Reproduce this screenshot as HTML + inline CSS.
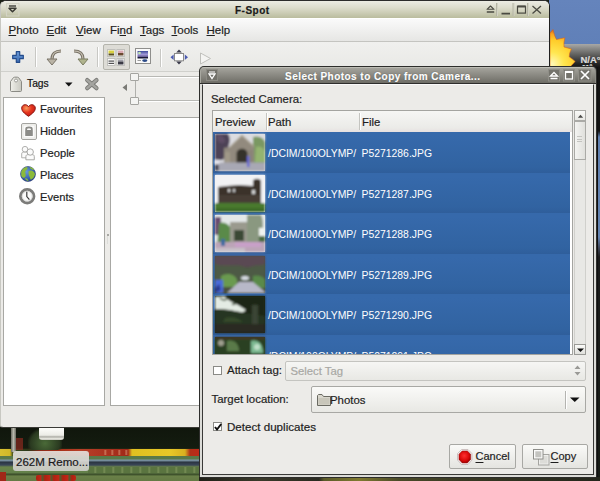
<!DOCTYPE html>
<html><head><meta charset="utf-8">
<style>
*{box-sizing:border-box;margin:0;padding:0}
html,body{width:600px;height:481px;overflow:hidden}
body{position:relative;font-family:"Liberation Sans",sans-serif;font-size:11px;color:#1e1e1e;background:#1b2116;-webkit-text-stroke:0.2px currentColor}
.a{position:absolute}
.t{position:absolute;white-space:nowrap;line-height:1}
u{text-decoration:underline;text-underline-offset:1px}
svg{position:absolute;overflow:visible}
.sep{position:absolute;width:2px;border-left:1px solid #c8c8c4;border-right:1px solid #fff}
.row{position:absolute;left:0;width:357px;height:40.6px;background:linear-gradient(#3669ab 10%,#3163a1 85%,#2f5e9b)}
.thumb{position:absolute;left:1.5px;top:2px;width:50px;height:37px}
.rt{position:absolute;top:17px;color:#fff;white-space:nowrap;line-height:1;font-size:10.4px;-webkit-text-stroke:0}
</style></head><body>

<svg width="0" height="0" style="position:absolute"><defs><filter id="bl" x="-5%" y="-5%" width="110%" height="110%"><feGaussianBlur stdDeviation="1"/></filter></defs></svg>
<!-- desktop top-right -->
<div class="a" style="left:549px;top:0;width:51px;height:44px;background:linear-gradient(#6584bc,#6080b8)"></div>
<div class="a" style="left:549px;top:44px;width:51px;height:23px;background:linear-gradient(#a8a8a6,#6a6a68 40%,#262626 85%,#161616)"></div>
<svg style="left:549px;top:28px" width="30" height="40" viewBox="0 0 30 40">
  <defs><radialGradient id="sun" cx="3" cy="36" r="34" gradientUnits="userSpaceOnUse"><stop offset="0" stop-color="#fff8b8"/><stop offset="0.35" stop-color="#ffe650"/><stop offset="0.7" stop-color="#ffcc2a"/><stop offset="0.88" stop-color="#f8a420"/><stop offset="1" stop-color="#d86818"/></radialGradient></defs>
  <path d="M1 5 L4 1.5 Q5.5 8.5 7.5 11.5 Q12 10.5 15.8 9.8 Q14.5 15.5 15 19 Q19 20 22.4 21 Q20 25.5 20.2 28.8 Q23.5 31 26.2 33.4 Q23.5 36.5 21.5 38.5 L1 38.5 Z" fill="url(#sun)" stroke="#d8601a" stroke-width="0.7" stroke-opacity="0.8"/>
</svg>
<div class="t" style="left:580.5px;top:55.3px;color:#dcdcdc;font-size:9.5px;font-weight:bold">N/A°</div>
<div class="t" style="left:582px;top:63.5px;color:#e8e8e8;font-size:7px;font-weight:bold">11°</div>
<!-- right strip -->
<div class="a" style="left:594px;top:67px;width:6px;height:414px;background:linear-gradient(#141414 0,#141414 64px,#6080b0 70px,#6282b0 170px,#3a4050 182px,#1c1c1c 190px,#181c16 414px)"></div><div class="a" style="left:597px;top:67px;width:1px;height:414px;background:#101010"></div>

<!-- desktop bottom-left garden -->
<div class="a" style="left:0;top:427px;width:200px;height:54px;background:linear-gradient(#10160c 0,#141c10 21px,#2a2a14 22px,#5a7848 29px,#5a7a48 32px,#8098a8 33px,#6a8090 34px,#2a3440 35px,#3a4658 38px,#6a8448 40px,#62804a 46px,#3a4a28 47px,#445a30 48px,#6a8048 49px,#647a44 54px)"></div>
<div class="a" style="left:0;top:449px;width:200px;height:7px;background:linear-gradient(90deg,#d8c030 0,#d0b828 10px,#3a4a20 13px,#2a3818 28px,#8a2a18 40px,#a83018 60px,#b84028 80px,#a02818 128px,#e0c020 132px,#e8c828 170px,#d8b020 185px,#b03018 190px,#c02818 200px)"></div>
<div class="a" style="left:100px;top:450px;width:30px;height:5px;background:repeating-linear-gradient(90deg,transparent 0,transparent 4px,rgba(240,200,160,.5) 5px,transparent 7px)"></div>
<div class="a" style="left:88px;top:467px;width:112px;height:6px;background:repeating-linear-gradient(90deg,#5a7440 0,#5a7440 6px,#7a9058 7px,#5a7440 9px)"></div>
<div class="a" style="left:28px;top:428px;width:34px;height:22px;background:radial-gradient(ellipse at 50% 70%,#4a6a38,#2a3a20 60%,transparent 75%)"></div>
<div class="a" style="left:15px;top:438px;width:8px;height:12px;background:#8a2a20;opacity:.7"></div>
<div class="a" style="left:11px;top:428px;width:5px;height:24px;background:linear-gradient(90deg,#6a6a60,#b8b8ac,#6a6a60)"></div>
<div class="a" style="left:36px;top:475px;width:40px;height:6px;background:repeating-linear-gradient(90deg,#b02010 0,#c02818 5px,#4a6030 6px,#b02010 9px);border-radius:2px"></div><div class="a" style="left:0;top:472px;width:6px;height:9px;background:#a02818"></div>
<div class="a" style="left:39px;top:428px;width:25px;height:12px;background:linear-gradient(#fdfdfa,#ececE6 60%,#a8a8a0 75%,#e8e8e0 85%,#c8c8c0);border-radius:0 0 3px 3px"></div>
<div class="a" style="left:13px;top:451px;width:76px;height:20px;background:linear-gradient(rgba(228,225,220,.92),rgba(205,205,200,.92));border-radius:3px"></div>
<div class="t" style="left:16px;top:456.8px;font-size:11.5px;color:#1a1a1a">262M Remo...</div>

<div class="a" style="left:199px;top:477px;width:401px;height:4px;background:linear-gradient(90deg,#202018 0,#3a3a2a 60px,#2a2a20 120px,#5a5a28 125px,#807a30 160px,#4a4a28 200px,#3a3a24 260px,#24261c 401px)"></div>
<!-- MAIN WINDOW -->
<div class="a" id="main" style="left:0;top:0;width:550px;height:428px;background:#ecebe8;border:1px solid #c8c8c2;border-top:1px solid #2c2c2c;border-right:1px solid #202020;border-bottom:1px solid #3a3a36;border-radius:6px 6px 3px 3px;overflow:hidden">
  <!-- title -->
  <div class="a" style="left:0;top:0;width:548px;height:17px;background:linear-gradient(#ecece4,#dcdccc 40%,#babc9e)"></div>
  <svg style="left:5px;top:1px" width="14" height="15"><rect x="0.5" y="1.5" width="12.5" height="12.5" fill="none" stroke="#d4d4c6"/><path d="M3 6.2 L10 6.2 L6.5 9.8 Z" fill="none" stroke="#3a3a34" stroke-width="1.5" stroke-linejoin="round"/><path d="M3 4 H10" stroke="#4a4a44" stroke-width="1.4"/></svg>
  <div class="t" style="left:234px;top:4.5px;font-weight:bold;font-size:10px;letter-spacing:0.5px;color:#1a1a1a">F-Spot</div>
  <svg style="left:483px;top:0px" width="64" height="17">
    <g stroke="#d2d2c4" stroke-width="1"><path d="M13.5 2 V15"/><path d="M30 2 V15"/><path d="M44.5 2 V15"/></g>
    <g stroke="#b4b4a4" stroke-width="1"><path d="M12.5 2 V15"/><path d="M29 2 V15"/><path d="M43.5 2 V15"/></g>
    <path d="M3 8.3 L6.5 5 L10 8.3 Z" fill="none" stroke="#4a4a42" stroke-width="1.1" stroke-linejoin="round"/><path d="M2.8 11 H10.2" stroke="#4a4a42" stroke-width="1.3"/>
    <path d="M17.5 12.6 H26" stroke="#4a4a42" stroke-width="1.6"/>
    <rect x="33.5" y="5.3" width="8" height="6.8" fill="none" stroke="#4a4a42" stroke-width="1.2"/><path d="M33.5 5.5 H41.5" stroke="#4a4a42" stroke-width="1.8"/>
    <path d="M48.5 5 L57 12.5 M57 5 L48.5 12.5" stroke="#4a4a42" stroke-width="1.3"/>
  </svg>
  <!-- menubar -->
  <div class="a" style="left:0;top:17px;width:548px;height:24px;background:linear-gradient(#fafafa,#e6e6e4);border-top:1px solid #fff;border-bottom:1px solid #c4c4c0"></div>
  <div class="t" style="left:7.5px;top:23.7px;font-size:11.5px"><u>P</u>hoto</div>
  <div class="t" style="left:45.5px;top:23.7px;font-size:11.5px"><u>E</u>dit</div>
  <div class="t" style="left:75px;top:23.7px;font-size:11.5px"><u>V</u>iew</div>
  <div class="t" style="left:109px;top:23.7px;font-size:11.5px">Fi<u>n</u>d</div>
  <div class="t" style="left:139px;top:23.7px;font-size:11.5px"><u>T</u>ags</div>
  <div class="t" style="left:170.5px;top:23.7px;font-size:11.5px"><u>T</u>ools</div>
  <div class="t" style="left:205.5px;top:23.7px;font-size:11.5px"><u>H</u>elp</div>
  <!-- toolbar -->
  <div class="a" style="left:0;top:41px;width:548px;height:29.5px;background:linear-gradient(#f0f0ee,#e8e8e5);border-bottom:1px solid #d0d0cc"></div>
  <svg style="left:10.5px;top:49.8px" width="13" height="13"><defs><linearGradient id="pg" x1="0" y1="0" x2="0" y2="1"><stop offset="0" stop-color="#6a9ad8"/><stop offset="1" stop-color="#3a6ab0"/></linearGradient></defs><path d="M4.3 0.7 H7.7 V4.3 H11.3 V7.7 H7.7 V11.3 H4.3 V7.7 H0.7 V4.3 H4.3 Z" fill="url(#pg)" stroke="#244c8c" stroke-width="1.2" stroke-linejoin="round"/></svg>
  <div class="sep" style="left:34px;top:46px;height:20px"></div>
  <svg style="left:45px;top:48px" width="16" height="18"><path d="M15 2 C9 2 6 5 6 10 L6 11" fill="none" stroke="#7a7468" stroke-width="3.2"/><path d="M15 2 C9 2 6 5 6 10" fill="none" stroke="#c8c2b4" stroke-width="1.2"/><path d="M1 10 L11 10 L6 16 Z" fill="#bab4a6" stroke="#7a7468" stroke-width="1"/></svg>
  <svg style="left:72px;top:48px" width="16" height="18"><path d="M1 2 C7 2 10 5 10 10 L10 11" fill="none" stroke="#7a7468" stroke-width="3.2"/><path d="M1 2 C7 2 10 5 10 10" fill="none" stroke="#c8c2b4" stroke-width="1.2"/><path d="M5 10 L15 10 L10 16 Z" fill="#b0b48e" stroke="#7a7c60" stroke-width="1"/></svg>
  <div class="sep" style="left:96px;top:46px;height:20px"></div>
  <div class="a" style="left:102px;top:43px;width:27px;height:25.5px;background:#dddcd6;border:1px solid #b4b4ac;border-radius:2px"></div>
  <svg style="left:106px;top:48px" width="19" height="19">
    <g stroke="#c0c0bc" stroke-width="1" fill="#fbfbfa"><rect x="0.5" y="0.5" width="7.5" height="7" /><rect x="10" y="0.5" width="7.5" height="7"/><rect x="0.5" y="9.5" width="7.5" height="7"/><rect x="10" y="9.5" width="7.5" height="7"/></g>
    <rect x="1.5" y="1.5" width="5.5" height="3" fill="#d8d040"/><rect x="1.5" y="4.5" width="5.5" height="2" fill="#5a5020"/>
    <rect x="11" y="1.5" width="5.5" height="2.5" fill="#d8a8b0"/><rect x="11" y="4" width="5.5" height="2.5" fill="#6a4a30"/>
    <rect x="1.5" y="11.5" width="5.5" height="1.2" fill="#505050"/><rect x="1.5" y="13.8" width="5.5" height="1.2" fill="#505050"/>
    <rect x="11" y="10.5" width="5.5" height="2" fill="#a0a0a8"/><rect x="11" y="12.5" width="5.5" height="3" fill="#3a3a44"/>
  </svg>
  <svg style="left:134px;top:47px" width="16" height="16"><defs><linearGradient id="mg" x1="0" y1="0" x2="0" y2="1"><stop offset="0" stop-color="#3a4898"/><stop offset="0.45" stop-color="#a098d8"/><stop offset="0.75" stop-color="#6a6098"/><stop offset="0.8" stop-color="#1a1a38"/><stop offset="1" stop-color="#1a1a38"/></linearGradient></defs><rect x="0.5" y="0.5" width="15" height="15" fill="#fafafa" stroke="#8e8e8c"/><rect x="2.5" y="3" width="10.5" height="7.5" fill="url(#mg)"/><circle cx="4.5" cy="5" r="1.3" fill="#c0e8b0"/><path d="M2.5 12.5 H6" stroke="#9a9a9a" stroke-width="1"/><ellipse cx="9.8" cy="12.6" rx="2.6" ry="1.4" fill="#2a4a88"/></svg>
  <div class="sep" style="left:159px;top:48px;height:18px"></div>
  <svg style="left:169px;top:48px" width="20" height="18">
    <rect x="4.5" y="4.5" width="9" height="7.3" fill="#fff" stroke="#8a8a8a"/>
    <path d="M9 0.5 L11.8 3.5 H6.2 Z" fill="#3a3a4a"/><path d="M9 15.5 L11.8 12.5 H6.2 Z" fill="#3a3a4a"/>
    <path d="M0.5 8.2 L3.6 5.4 V11 Z" fill="#4a5ab0"/><path d="M18 8.2 L14.8 5.4 V11 Z" fill="#4a5ab0"/>
  </svg>
  <svg style="left:197.5px;top:50.5px" width="14" height="14"><path d="M1.5 1 L11.5 6.5 L1.5 12 Z" fill="#f4f4f2" stroke="#c0c0bc" stroke-width="1"/></svg>

  <!-- tags header -->
  <svg style="left:8px;top:75px" width="14" height="17"><defs><linearGradient id="tg" x1="0" x2="1"><stop offset="0" stop-color="#f0f0ea"/><stop offset="1" stop-color="#c8c8c0"/></linearGradient></defs><path d="M1.5 5.5 L4.5 1.5 C5 1 9 1 9.5 1.5 L12.5 5.5 V14.5 C12.5 15.2 12 15.5 11.5 15.5 H2.5 C2 15.5 1.5 15.2 1.5 14.5 Z" fill="url(#tg)" stroke="#8a8a84" stroke-width="1"/><circle cx="7" cy="4.5" r="1.5" fill="#fff" stroke="#8a8a84" stroke-width="0.8"/></svg>
  <div class="t" style="left:26px;top:78px;font-size:10.3px;color:#111">Tags</div>
  <svg style="left:64px;top:81px" width="8" height="5"><path d="M0 0.5 H7.5 L3.75 4.5 Z" fill="#111"/></svg>
  <svg style="left:84px;top:77px" width="15" height="14"><path d="M2.2 2.1 L11.5 10.2 M11.5 2.1 L2.2 10.2" stroke="#7c7c78" stroke-width="4.2" stroke-linecap="round"/><path d="M2.2 2.1 L11.5 10.2 M11.5 2.1 L2.2 10.2" stroke="#a4a4a0" stroke-width="2.4" stroke-linecap="round"/></svg>

  <!-- left pane -->
  <div class="a" style="left:2px;top:96px;width:102px;height:309px;background:#fff;border:1px solid #a8a8a4"></div>
  <svg style="left:19.5px;top:102.5px" width="15" height="13"><defs><radialGradient id="hg" cx="0.35" cy="0.3" r="0.8"><stop offset="0" stop-color="#f8a060"/><stop offset="0.45" stop-color="#e83820"/><stop offset="1" stop-color="#b81410"/></radialGradient></defs><path d="M7.5 12.3 C3 9.2 0.7 7 0.7 4.2 C0.7 2 2.3 0.7 4.2 0.7 C5.6 0.7 6.9 1.5 7.5 2.8 C8.1 1.5 9.4 0.7 10.8 0.7 C12.7 0.7 14.3 2 14.3 4.2 C14.3 7 12 9.2 7.5 12.3 Z" fill="url(#hg)" stroke="#8a1410" stroke-width="1"/></svg>
  <div class="t" style="left:39px;top:103px;font-size:11.2px">Favourites</div>
  <svg style="left:19.5px;top:122px" width="16" height="17"><rect x="0.5" y="0.5" width="15" height="16" rx="1.5" fill="#f6f6f4" stroke="#a4a4a0"/><rect x="2" y="2" width="12" height="13" fill="#fbfbfa" stroke="#e0e0dc" stroke-width="0.8"/><path d="M5.2 7 V5.8 C5.2 4 10.8 4 10.8 5.8 V7" fill="none" stroke="#8c8c88" stroke-width="1.8"/><rect x="4.2" y="7" width="7.6" height="6" rx="0.5" fill="#8c8c88"/></svg>
  <div class="t" style="left:39px;top:125px;font-size:11.2px">Hidden</div>
  <svg style="left:19px;top:145px" width="16" height="15"><path d="M1.7 11.8 V8 C1.7 6.5 2.5 6 4 6 H6 C7.2 6 7.7 6.5 7.7 8 V11.8 Z" fill="#fbfbfb" stroke="#a8a8a6" stroke-width="0.9"/><circle cx="5" cy="3.2" r="2.8" fill="#fbfbfb" stroke="#a8a8a6" stroke-width="0.9"/><path d="M5.9 13.8 V10.5 C5.9 9.2 6.8 8.6 8.3 8.6 H12 C13.5 8.6 14.3 9.2 14.3 10.5 V13.8 Z" fill="#fbfbfb" stroke="#a0a09e" stroke-width="0.9"/><circle cx="10.2" cy="6" r="3.2" fill="#fbfbfb" stroke="#a0a09e" stroke-width="0.9"/></svg>
  <div class="t" style="left:39px;top:147px;font-size:11.2px">People</div>
  <svg style="left:19px;top:165px" width="16" height="16"><defs><radialGradient id="gl" cx="0.4" cy="0.35" r="0.75"><stop offset="0" stop-color="#6a9ad8"/><stop offset="0.6" stop-color="#3a64b0"/><stop offset="1" stop-color="#1e3a80"/></radialGradient></defs><circle cx="8" cy="8" r="7.5" fill="url(#gl)" stroke="#2a3a70" stroke-width="0.6"/><path d="M1.2 6 C2 3 4 1.2 7 1 C8.5 2.5 6.5 4 5.5 5 C4.5 6.5 6.5 8.5 5.5 10.5 C4.5 12.5 2.5 12 1.3 10 Z M8.5 5.5 C10.5 3.5 14 4.5 15 8 C14.5 11 12.5 13.5 10.5 13.5 C10 11 8 8.5 8.5 5.5 Z M9.5 1 C12 1.2 13.5 2.5 14.2 3.8 C12.2 4 10.2 3 9.5 1 Z M5 12.5 C6.5 12 8 13 8.5 15 C7 15 5.5 14 5 12.5Z" fill="#8cba3a"/></svg>
  <div class="t" style="left:39px;top:168.5px;font-size:11.2px">Places</div>
  <svg style="left:18px;top:187px" width="17" height="17"><circle cx="8.2" cy="8.2" r="6.8" fill="#fafafa" stroke="#7c7c7a" stroke-width="2.8"/><circle cx="8.2" cy="8.2" r="5" fill="none" stroke="#d0d0ce" stroke-width="0.8"/><path d="M7.8 3.8 V8.6 L10.4 11.6" fill="none" stroke="#3a3a3a" stroke-width="1.2"/></svg>
  <div class="t" style="left:39px;top:190.5px;font-size:11.2px">Events</div>

  <!-- pane handle -->
  <div class="a" style="left:105.5px;top:233px;width:2px;height:1.5px;background:#a8a8a4"></div><div class="a" style="left:105.5px;top:235px;width:2px;height:8px;background:linear-gradient(90deg,#d4d4d0,#f4f4f2)"></div>

  <!-- slider -->
  <svg style="left:120.5px;top:83px" width="6" height="8"><path d="M5 0 V7 L0.5 3.5 Z" fill="#7a7a76"/></svg>
  <div class="a" style="left:134px;top:78px;width:1px;height:20px;background:#b0b0ac"></div>
  <div class="a" style="left:137px;top:75px;width:63px;height:2px;border-top:1px solid #b8b8b4;border-bottom:1px solid #fff"></div>
  <div class="a" style="left:137px;top:99px;width:63px;height:2px;border-top:1px solid #b8b8b4;border-bottom:1px solid #fff"></div>
  <div class="a" style="left:129px;top:72px;width:9px;height:8px;background:#f4f4f2;border:1px solid #a4a4a0;border-radius:1px"></div>
  <div class="a" style="left:129px;top:96px;width:9px;height:8px;background:#f4f4f2;border:1px solid #a4a4a0;border-radius:1px"></div>

  <!-- photo area -->
  <div class="a" style="left:109px;top:116px;width:440px;height:289px;background:#fff;border:1px solid #a8a8a4"></div>
</div>

<!-- DIALOG -->
<div class="a" id="dlg" style="left:199px;top:66px;width:398px;height:412px;background:#2e2e2c;border-radius:5px 5px 2px 2px;overflow:hidden">
  <div class="a" style="left:1px;top:1px;width:396px;height:16px;background:linear-gradient(#a4a39c,#6e6d66);border-radius:4px 4px 0 0;border-top:1px solid #bcbcb4;border-left:1px solid #a8a8a0;border-right:1px solid #8a8a84"></div>
  <div class="a" style="left:1px;top:18px;width:396px;height:393px;background:#dcdcd8"></div>
  <div class="a" style="left:3px;top:18px;width:392px;height:391px;background:#ecebe8;border:1px solid #3a3a38;border-top:1px solid #fafafa"></div>
  <svg style="left:7px;top:3px" width="12" height="12"><rect x="0.5" y="0.5" width="11" height="11" fill="#72716a" stroke="#8c8b84"/><path d="M3 5 H9 L6 9.5 Z" fill="none" stroke="#fff" stroke-width="1.3"/><path d="M3 3 H9" stroke="#fff"/></svg>
  <div class="t" style="left:86px;top:6px;font-weight:bold;font-size:10px;letter-spacing:0.46px;color:#fff;text-shadow:0 0 1px #333">Select Photos to Copy from Camera...</div>
  <svg style="left:349px;top:3px" width="45" height="13">
    <g fill="#74736c" stroke="#8e8d86"><rect x="0.5" y="0.5" width="11" height="11.5"/><rect x="15.5" y="0.5" width="11" height="11.5"/><rect x="30.5" y="0.5" width="12.5" height="11.5"/></g>
    <path d="M2.5 7 L6 3.5 L9.5 7 Z M2.5 9.5 H9.5" fill="none" stroke="#fff" stroke-width="1.3"/>
    <rect x="17.5" y="2.5" width="7" height="7.5" fill="none" stroke="#fff" stroke-width="1.3"/><path d="M17.5 3 H24.5" stroke="#fff" stroke-width="2"/>
    <path d="M33 2 L41 10 M41 2 L33 10" stroke="#fff" stroke-width="1.7"/>
  </svg>
  <div class="t" style="left:12px;top:28px;font-size:11.4px">Selected Camera:</div>

  <!-- tree -->
  <div class="a" style="left:13px;top:44px;width:361px;height:245px;background:#fff;border:1px solid #a4a4a0;overflow:hidden">
    <div class="a" style="left:0;top:0;width:359px;height:21px;background:linear-gradient(#f6f6f4,#ebebe8 80%,#e6e0e0)"></div>
    <div class="a" style="left:53px;top:2px;width:2px;height:17px;border-left:1px solid #c4c4c0;border-right:1px solid #fff"></div>
    <div class="a" style="left:146px;top:2px;width:2px;height:17px;border-left:1px solid #c4c4c0;border-right:1px solid #fff"></div>
    <div class="t" style="left:2px;top:6px;font-size:11.3px">Preview</div>
    <div class="t" style="left:55px;top:6px;font-size:11.3px">Path</div>
    <div class="t" style="left:149px;top:6px;font-size:11.3px">File</div>

    <div class="row" style="top:21px">
      <svg class="thumb" viewBox="0 0 50 37"><rect width="50" height="37" fill="#dcdce0"/><g filter="url(#bl)"><rect width="50" height="37" fill="#dcdce0"/><path d="M0 0 H13 C16 4 15 10 12 16 L8 26 H0Z" fill="#4e4256"/><path d="M2 1 C6 0 10 3 10 8 C7 10 3 9 2 5Z" fill="#5e4e66"/><path d="M38 3 C44 1 50 5 50 9 V29 H38Z" fill="#7a9862"/><path d="M41 13 C46 11 50 15 50 19 V28 H40Z" fill="#94b470"/><path d="M9 14 L15 13 L27 1.5 L39 12.5 V30 H9Z" fill="#928a7e"/><path d="M15 13 L27 1.5 L39 12.5" fill="none" stroke="#aca494" stroke-width="1.5"/><path d="M21.5 29 V19.5 C21.5 13 32.5 13 32.5 19.5 V29Z" fill="#34302a"/><rect x="10" y="18" width="5" height="11" fill="#a09888"/><rect x="34" y="16" width="4" height="13" fill="#8a8478"/><rect y="28.5" width="50" height="8.5" fill="#a8a8b4"/><rect x="32" y="22" width="2.5" height="11" fill="#6a6ad0"/><circle cx="2" cy="28" r="2.6" fill="#e4e4ec"/><rect x="0" y="30.5" width="3.5" height="6" fill="#3a3a48"/></g></svg>
      <div class="rt" style="left:55px">/DCIM/100OLYMP/</div><div class="rt" style="left:148.5px">P5271286.JPG</div>
    </div>
    <div class="row" style="top:61.6px">
      <svg class="thumb" viewBox="0 0 50 37"><rect width="50" height="37" fill="#f2f2f4"/><g filter="url(#bl)"><rect width="50" height="37" fill="#f2f2f4"/><path d="M3 12 L12 11 L24 10 L38 11 V6 C39 3 45 3 46 6 V29 H3Z" fill="#3a302c"/><rect x="3" y="20" width="43" height="9" fill="#463c34"/><rect x="13" y="14" width="2" height="3" fill="#e0e0e0"/><rect x="18" y="14" width="2" height="3" fill="#d0d0d0"/><rect x="37" y="15" width="3" height="4" fill="#d8d8d8"/><rect y="28" width="50" height="9" fill="#487a2e"/><rect y="33" width="50" height="4" fill="#3c6a28"/></g></svg>
      <div class="rt" style="left:55px">/DCIM/100OLYMP/</div><div class="rt" style="left:148.5px">P5271287.JPG</div>
    </div>
    <div class="row" style="top:102.2px">
      <svg class="thumb" viewBox="0 0 50 37"><rect width="50" height="37" fill="#e4e8e8"/><g filter="url(#bl)"><rect width="50" height="37" fill="#e4e8e8"/><path d="M0 2 H6 V20 H0Z" fill="#6a4a70"/><path d="M4 8 C10 6 16 10 16 16 V32 H2 Z" fill="#5a8a4a"/><rect x="15" y="7" width="18" height="21" fill="#9a9a8e"/><rect x="19" y="15" width="10" height="11" fill="#3a4836"/><path d="M32 0 H46 C49 6 48 14 46 28 H32Z" fill="#8a9880"/><rect x="44" y="13" width="6" height="8" fill="#f0f4f0"/><rect x="44" y="21" width="6" height="8" fill="#4a6a40"/><rect y="27" width="50" height="10" fill="#bca4b8"/><rect x="20" y="27" width="26" height="5" fill="#c8a0c8"/><rect y="33" width="30" height="4" fill="#c8c0c8"/><rect x="6" y="24" width="4" height="7" fill="#3a6aa0"/></g></svg>
      <div class="rt" style="left:55px">/DCIM/100OLYMP/</div><div class="rt" style="left:148.5px">P5271288.JPG</div>
    </div>
    <div class="row" style="top:142.8px">
      <svg class="thumb" viewBox="0 0 50 37"><rect width="50" height="37" fill="#4a5040"/><g filter="url(#bl)"><rect width="50" height="37" fill="#4a5040"/><rect width="50" height="11" fill="#5a4a52"/><path d="M0 8 C12 12 22 6 32 12 C40 8 46 10 50 8 V26 H0Z" fill="#4e5a44"/><path d="M6 20 C12 16 20 18 22 24 V31 H6Z" fill="#6a9a50"/><path d="M38 20 C44 18 50 22 50 24 V32 H38Z" fill="#5a8a48"/><ellipse cx="30" cy="22" rx="4" ry="2" fill="#d8dce4"/><path d="M12 37 L24 26 H38 L50 36 V37Z" fill="#b8b8c8"/><path d="M0 24 H8 V37 H0Z" fill="#4a6ad8"/><path d="M0 32 L4 28 L6 34 L0 37Z" fill="#2a3a90"/></g></svg>
      <div class="rt" style="left:55px">/DCIM/100OLYMP/</div><div class="rt" style="left:148.5px">P5271289.JPG</div>
    </div>
    <div class="row" style="top:183.4px">
      <svg class="thumb" viewBox="0 0 50 37"><rect width="50" height="37" fill="#1e2618"/><g filter="url(#bl)"><rect width="50" height="37" fill="#1e2618"/><path d="M0 1 L9 0 L15 5 L23 9 L31 14 L27 17 L15 14 L0 13 Z" fill="#e4ece4"/><path d="M5 2 C8 5 11 4 13 2 M17 8 C19 9 20 8 21 7" stroke="#3a4a34" stroke-width="1.6" fill="none"/><path d="M0 13 C10 13 20 15 31 17 L50 20 V37 H0Z" fill="#283620"/><rect x="37" y="9" width="6" height="20" fill="#3a4434"/><path d="M0 28 H50 V37 H0Z" fill="#2a2a22"/><path d="M10 22 C16 20 24 22 28 26 H8Z" fill="#344a2a"/></g></svg>
      <div class="rt" style="left:55px">/DCIM/100OLYMP/</div><div class="rt" style="left:148.5px">P5271290.JPG</div>
    </div>
    <div class="row" style="top:224px">
      <svg class="thumb" viewBox="0 0 50 37"><rect width="50" height="37" fill="#2a4020"/><g filter="url(#bl)"><rect width="50" height="37" fill="#2a4020"/><rect width="50" height="2" fill="#4a3028"/><path d="M12 4 C18 2 24 6 24 14 H12Z" fill="#5a7a48"/><path d="M36 4 C44 2 48 8 48 16 H36Z" fill="#7ab890"/><circle cx="42" cy="10" r="3" fill="#c0e0c8"/><circle cx="6" cy="6" r="3" fill="#a0a090"/></g></svg>
      <div class="rt" style="left:55px">/DCIM/100OLYMP/</div><div class="rt" style="left:148.5px">P5271291.JPG</div>
    </div>
  </div>
  <!-- scrollbar -->
  <div class="a" style="left:375px;top:44px;width:12px;height:245px;background:#e8e8e5;border:1px solid #d0d0cc"></div>
  <div class="a" style="left:375px;top:44px;width:12px;height:11px;background:linear-gradient(#fafaf8,#e8e8e4);border:1px solid #aaaaa6"></div>
  <svg style="left:377.5px;top:47.5px" width="7" height="5"><path d="M0.8 3.8 H6.2 L3.5 0.8 Z" fill="#4a4a48"/></svg>
  <div class="a" style="left:375px;top:55px;width:12px;height:39px;background:linear-gradient(90deg,#f4f4f2,#e0e0dc);border:1px solid #aaaaa6"></div>
  <div class="a" style="left:378px;top:70px;width:5px;height:8px;background:repeating-linear-gradient(#c4c4c0 0,#c4c4c0 1px,transparent 1px,transparent 2.5px)"></div>
  <div class="a" style="left:375px;top:278px;width:12px;height:11px;background:linear-gradient(#fafaf8,#e0e0dc);border:1px solid #9a9a96"></div>
  <svg style="left:377.5px;top:282px" width="7" height="5"><path d="M0 0.5 H7 L3.5 4 Z" fill="#111"/></svg>

  <!-- attach tag -->
  <div class="a" style="left:14px;top:300px;width:9px;height:9px;background:#fff;border:1px solid #8a8a86"></div>
  <div class="t" style="left:28px;top:298.5px;font-size:11.5px">Attach tag:</div>
  <div class="a" style="left:85.5px;top:294.5px;width:301px;height:20px;background:linear-gradient(#f6f6f4,#e8e8e4);border:1px solid #c4c4c0;border-radius:2px"></div>
  <div class="t" style="left:91.5px;top:299.5px;color:#a8a8a4;font-size:11.3px">Select Tag</div>
  <svg style="left:375px;top:299px" width="8" height="11"><path d="M0.5 4 L3.5 0.5 L6.5 4 Z M0.5 7 L3.5 10.5 L6.5 7 Z" fill="#9a9a96"/></svg>

  <!-- target location -->
  <div class="t" style="left:12.5px;top:328px;font-size:11.4px">Target location:</div>
  <div class="a" style="left:112px;top:320px;width:275px;height:27px;background:linear-gradient(#fafaf8,#e8e8e4);border:1px solid #a8a8a4;border-radius:2px"></div>
  <svg style="left:118px;top:327px" width="14" height="13"><path d="M0.5 2.5 V12.5 H13.5 V3.5 H6.5 L5 1.5 H1.5 Z" fill="#d8d6cc" stroke="#6a6a62"/><rect x="1.5" y="5" width="11" height="6.5" fill="#c8c6ba"/></svg>
  <div class="t" style="left:131px;top:328.5px;font-size:11.4px">Photos</div>
  <div class="a" style="left:366px;top:324.5px;width:2px;height:18px;border-left:1px solid #b4b4b0;border-right:1px solid #fff"></div>
  <svg style="left:370.5px;top:331px" width="10" height="6"><path d="M0 0.5 H9.5 L4.75 5 Z" fill="#111"/></svg>

  <!-- detect dup -->
  <div class="a" style="left:14px;top:355.5px;width:9px;height:9px;background:#fff;border:1px solid #8a8a86"></div>
  <svg style="left:15px;top:356.5px" width="8" height="8"><path d="M1 4 L3 6.5 L7.2 1" fill="none" stroke="#111" stroke-width="2"/></svg>
  <div class="t" style="left:28px;top:355px;font-size:11.6px">Detect duplicates</div>

  <!-- buttons -->
  <div class="a" style="left:250px;top:378px;width:67px;height:25px;background:linear-gradient(#fafaf8,#e4e4e0);border:1px solid #a8a8a4;border-radius:2px"></div>
  <svg style="left:258px;top:382.5px" width="16" height="16"><defs><radialGradient id="cg" cx="0.45" cy="0.4" r="0.6"><stop offset="0" stop-color="#ff3030"/><stop offset="0.7" stop-color="#d80808"/><stop offset="1" stop-color="#a00000"/></radialGradient></defs><path d="M4.6 0.5 H11 L15 4.6 V11 L11 15.5 H4.6 L0.5 11 V4.6 Z" fill="#f2eeee" stroke="#c4b4b4" stroke-width="0.8"/><path d="M5.2 2 H10.4 L13.6 5.2 V10.4 L10.4 13.9 H5.2 L2 10.4 V5.2 Z" fill="url(#cg)" stroke="#9a1010" stroke-width="0.6"/></svg>
  <div class="t" style="left:276.5px;top:385px"><u style="text-underline-offset:2px">C</u>ancel</div>
  <div class="a" style="left:322.5px;top:378px;width:66.5px;height:25px;background:linear-gradient(#fafaf8,#e4e4e0);border:1px solid #a8a8a4;border-radius:2px"></div>
  <svg style="left:333.5px;top:382.5px" width="17" height="17"><rect x="5.5" y="5.5" width="10.5" height="10.5" fill="#eeeeec" stroke="#a4a4a0"/><rect x="7" y="7" width="7.5" height="7.5" fill="#dcdcd8"/><rect x="0.5" y="0.5" width="9.5" height="9.5" fill="#fbfbfa" stroke="#8e8e8a"/><rect x="2.3" y="2.3" width="6" height="6" fill="#c4c4c0"/></svg>
  <div class="t" style="left:351.5px;top:385px"><u style="text-underline-offset:2px">C</u>opy</div>
</div>

</body></html>
